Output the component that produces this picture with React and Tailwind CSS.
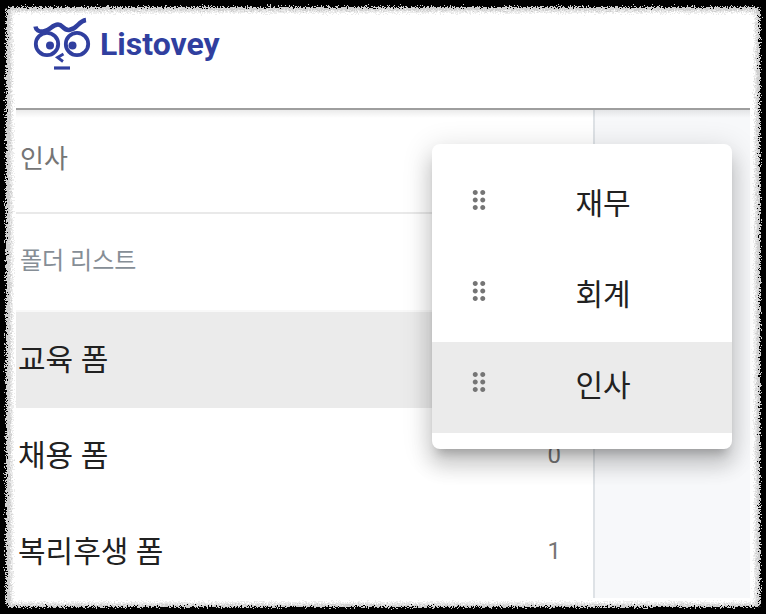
import { useState } from 'react';
import { MdDragIndicator } from 'react-icons/md';

const GROUPS = ['재무', '회계', '인사'];

const FOLDERS = [
  { name: '교육 폼' },
  { name: '채용 폼', count: 0 },
  { name: '복리후생 폼', count: 1 },
];

function Logo() {
  return (
    <svg viewBox="0 0 60 56" className="h-14 w-15 shrink-0" fill="none" stroke="#303f9f" aria-hidden="true">
      {/* Eyebrows */}
      <path
        d="M3.5 10.5 C4 14 7 16 11 15.5 C18 15 20 8.5 26 8.5 C31 8.5 31 14.5 37 14 C46 13 46 5 54 4"
        strokeWidth="4.5"
      />
      {/* Eyes */}
      <circle cx="15" cy="28" r="11.2" strokeWidth="3.8" />
      <circle cx="45" cy="28" r="11.2" strokeWidth="3.8" />
      <circle cx="18" cy="29.5" r="4" fill="#303f9f" stroke="none" />
      <circle cx="40.5" cy="29.5" r="4" fill="#303f9f" stroke="none" />
      {/* Nose and mouth */}
      <path d="M31.5 38 L25.5 41.5 L31 45.5" strokeWidth="2.8" />
      <path d="M22 52 H38" strokeWidth="3.2" />
    </svg>
  );
}

// Torn paper edge around the whole page
function RoughEdge() {
  return (
    <svg className="pointer-events-none absolute inset-0 z-20 h-full w-full" aria-hidden="true">
      <filter id="rough" x="0" y="0" width="100%" height="100%" colorInterpolationFilters="sRGB">
        <feTurbulence type="fractalNoise" baseFrequency="0.7" numOctaves="3" seed="4" />
        <feDisplacementMap in="SourceGraphic" scale="9" xChannelSelector="R" yChannelSelector="G" />
        <feGaussianBlur stdDeviation="0.4" />
      </filter>
      <g filter="url(#rough)" fill="none">
        <rect x="9" y="9" rx="6" className="h-[calc(100%-17px)] w-[calc(100%-17px)]" stroke="#ececec" strokeWidth="8" />
        <rect x="8" y="8" rx="6" className="h-[calc(100%-15px)] w-[calc(100%-15px)]" stroke="#cfcfcf" strokeWidth="5" />
        <rect x="2" y="3" rx="6" className="h-[calc(100%-6px)] w-[calc(100%-4px)]" stroke="#000" strokeWidth="8" />
      </g>
    </svg>
  );
}

export default function App() {
  const [group, setGroup] = useState('인사');
  const [folder, setFolder] = useState('교육 폼');

  return (
    <div className="relative flex min-h-screen flex-col bg-black p-2 font-['Roboto','Noto_Sans_CJK_KR',sans-serif] text-[#212121]">
      <div className="flex flex-1 flex-col rounded-lg bg-white px-2 pb-2">
        <header className="flex h-25 items-start gap-2 px-4 pt-2">
          <Logo />
          <h1 className="pt-2 text-[32px] leading-10 font-bold text-[#303f9f]">Listovey</h1>
        </header>

        <div className="relative flex flex-1 border-t-2 border-[#9e9e9e]">
          <div className="absolute inset-x-0 top-0 h-2 bg-linear-to-b from-black/8 to-transparent" />
          <nav className="h-[488px] flex-1 overflow-hidden border-r-2 border-[#dee2e6]">
            <h2 className="h-26 border-b-2 border-[#e9e9e9] px-1 pt-7 text-[26px] leading-[42px] text-[#757575]">
              {group}
            </h2>
            <h3 className="h-[98px] border-b-2 border-[#f8f8f8] px-1 pt-6 text-2xl leading-[46px] text-[#868e96]">
              폴더 리스트
            </h3>
            <ul>
              {FOLDERS.map((f) => (
                <li key={f.name}>
                  <button
                    type="button"
                    onClick={() => setFolder(f.name)}
                    className={`flex h-24 w-full items-center justify-between pr-8 pb-0.5 pl-0.5 text-left text-[30px] ${
                      f.name === folder ? 'bg-[#ebebeb]' : ''
                    }`}
                  >
                    <span>{f.name}</span>
                    <span className="text-2xl text-[#757575]">{f.count}</span>
                  </button>
                </li>
              ))}
            </ul>
          </nav>
          <main className="w-[155px] bg-[#f7f8fa]" />

          <ul className="absolute top-[34px] right-[18px] w-75 rounded-lg bg-white py-4 shadow-[0_10px_10px_-6px_rgba(0,0,0,0.2),0_16px_20px_2px_rgba(0,0,0,0.14),0_6px_28px_4px_rgba(0,0,0,0.12)]">
            {GROUPS.map((g) => (
              <li key={g}>
                <button
                  type="button"
                  onClick={() => setGroup(g)}
                  className={`flex h-[91px] w-full items-center px-8 pb-1 text-[30px] ${
                    g === group ? 'bg-[#ebebeb]' : ''
                  }`}
                >
                  <MdDragIndicator className="mb-2 size-[30px] text-[#757575]" />
                  <span className="flex-1 pl-3 text-center">{g}</span>
                </button>
              </li>
            ))}
          </ul>
        </div>
      </div>
      <RoughEdge />
    </div>
  );
}
